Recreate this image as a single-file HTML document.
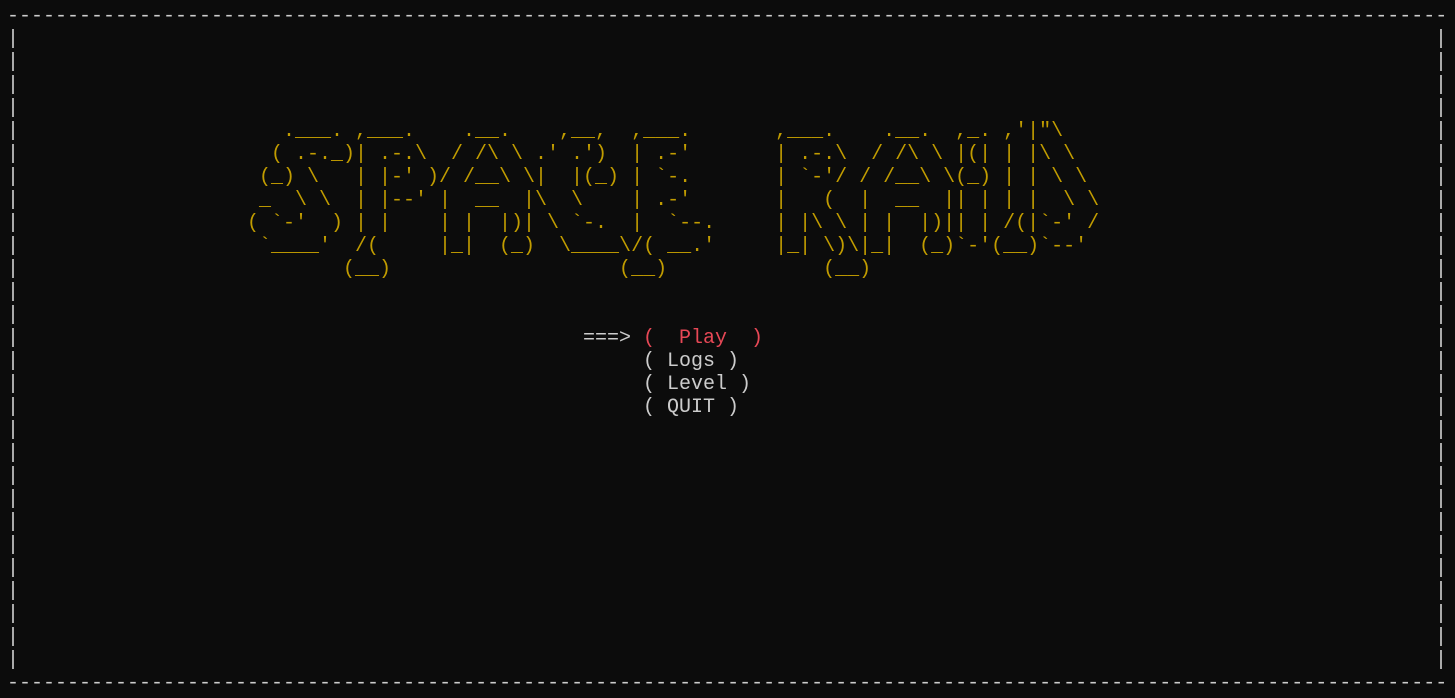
<!DOCTYPE html>
<html><head><meta charset="utf-8"><style>
html,body{margin:0;padding:0;background:#0c0c0c;width:1455px;height:698px;overflow:hidden}
pre{position:absolute;margin:0;font-family:"Liberation Mono",monospace;font-size:20px;line-height:23px;white-space:pre;color:#cccccc}
.y{color:#c19c00}
.r{color:#e74856}
</style></head><body>
<pre style="left:7px;top:5px">------------------------------------------------------------------------------------------------------------------------</pre>
<pre style="left:7px;top:672px">------------------------------------------------------------------------------------------------------------------------</pre>
<pre style="left:7px;top:28px">|
|
|
|
|
|
|
|
|
|
|
|
|
|
|
|
|
|
|
|
|
|
|
|
|
|
|
|</pre>
<pre style="left:1435px;top:28px">|
|
|
|
|
|
|
|
|
|
|
|
|
|
|
|
|
|
|
|
|
|
|
|
|
|
|
|</pre>
<pre class="y" style="left:247px;top:120px">   .___. ,___.    .__.    ,__,  ,___.       ,___.    .__.  ,_. ,'|"\
  ( .-._)| .-.\  / /\ \ .' .')  | .-'       | .-.\  / /\ \ |(| | |\ \
 (_) \   | |-' )/ /__\ \|  |(_) | `-.       | `-'/ / /__\ \(_) | | \ \
 _  \ \  | |--' |  __  |\  \    | .-'       |   (  |  __  || | | |  \ \
( `-'  ) | |    | |  |)| \ `-.  |  `--.     | |\ \ | |  |)|| | /(|`-' /
 `____'  /(     |_|  (_)  \____\/( __.'     |_| \)\|_|  (_)`-'(__)`--'
        (__)                   (__)             (__)</pre>
<pre style="left:583px;top:327px">===&gt; <span class="r">(  Play  )</span>
     ( Logs )
     ( Level )
     ( QUIT )</pre>
</body></html>
